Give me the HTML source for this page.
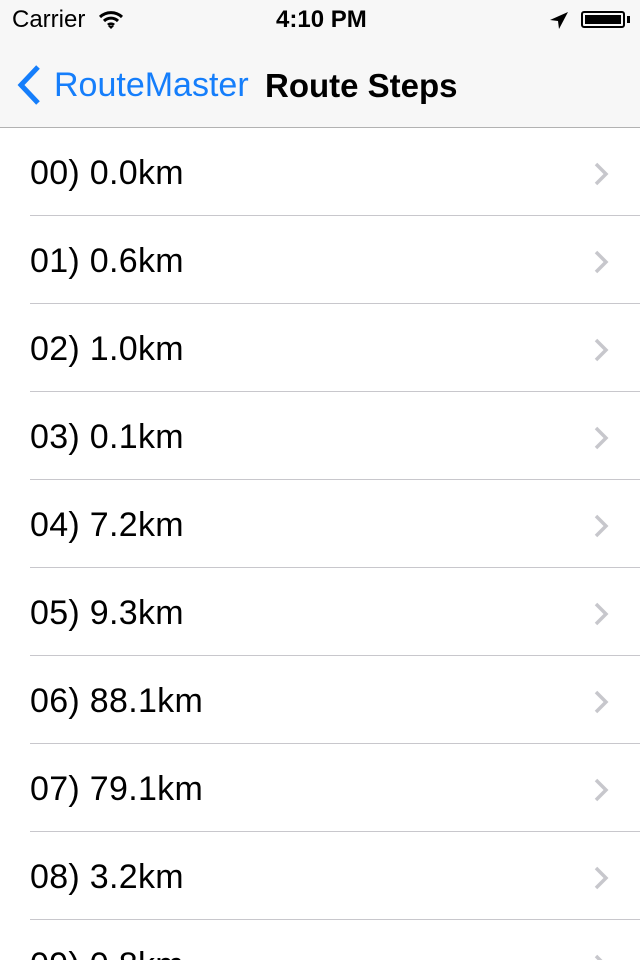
<!DOCTYPE html>
<html style="overflow:hidden;height:960px"><head><style>
body{margin:0;width:640px;height:960px;overflow:hidden;background:#fff;font-family:"Liberation Sans",sans-serif;position:relative}
.bar{position:absolute;left:0;top:0;width:640px;height:128px;background:#f7f7f7;border-bottom:1px solid #b2b2b2;box-sizing:border-box}
.t{position:absolute;white-space:nowrap}
.row{position:absolute;left:0;width:640px;height:88px}
.row .l{position:absolute;left:30px;top:26px;font-size:34px;letter-spacing:0.3px;color:#000;white-space:nowrap}
.row .sep{position:absolute;left:30px;right:0;bottom:0;height:1px;background:#c8c7cc}
.row svg{position:absolute;left:592px;top:33px}
</style></head><body>
<div class="bar">
<div class="t" style="left:12px;top:6px;font-size:24px">Carrier</div>
<svg style="position:absolute;left:98px;top:10px" width="26" height="20" viewBox="0 0 26 20"><path d="M2 7a16 16 0 0 1 22 0M6 11a10 10 0 0 1 14 0M10 15a4.5 4.5 0 0 1 6 0" stroke="#000" stroke-width="3" fill="none"/><path d="M10 16l3 3 3-3z" fill="#000"/></svg>
<div class="t" style="left:276px;top:6px;font-size:24px;font-weight:bold">4:10 PM</div>
<svg style="position:absolute;left:549px;top:11px" width="20" height="20" viewBox="0 0 20 20"><path d="M19 1L1 9l8 1 1 8z" fill="#000"/></svg>
<div style="position:absolute;left:581px;top:11px;width:44px;height:17px;border:2px solid #000;border-radius:3px;box-sizing:border-box;padding:2px"><div style="background:#000;height:100%"></div></div>
<div style="position:absolute;left:627px;top:16px;width:3px;height:7px;background:#000"></div>
<svg style="position:absolute;left:14px;top:64px" width="28" height="42" viewBox="0 0 28 42"><path d="M24 3L7 21l17 18" stroke="#157efb" stroke-width="5" fill="none"/></svg>
<div class="t" style="left:54px;top:66px;font-size:34px;color:#157efb">RouteMaster</div>
<div class="t" style="left:265px;top:67px;font-size:33px;font-weight:bold;color:#000">Route Steps</div>
</div>
<div id="list"></div>
<script>
var d=["0.0","0.6","1.0","0.1","7.2","9.3","88.1","79.1","3.2","0.8"],h="";
d.forEach(function(v,i){h+='<div class="row" style="top:'+(128+i*88)+'px"><div class="l">0'+i+') '+v+'km</div><svg width="18" height="26" viewBox="0 0 18 26"><path d="M4 3l10 10-10 10" stroke="#c7c7cc" stroke-width="3.5" fill="none"/></svg><div class="sep"></div></div>'});
document.getElementById("list").innerHTML=h;
</script>
</body></html>
